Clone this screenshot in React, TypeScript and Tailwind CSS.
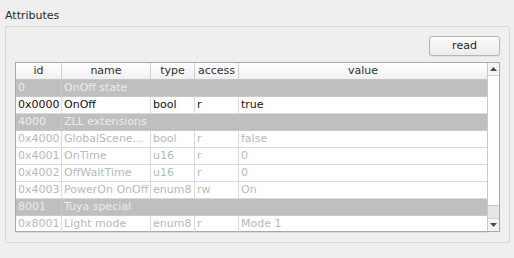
import { ReactNode } from 'react';

type Row =
  | { kind: 'group'; id: string; title: string }
  | { kind: 'attr'; id: string; name: string; type: string; access: string; value: string; enabled?: boolean };

const rows: Row[] = [
  { kind: 'group', id: '0', title: 'OnOff state' },
  { kind: 'attr', id: '0x0000', name: 'OnOff', type: 'bool', access: 'r', value: 'true', enabled: true },
  { kind: 'group', id: '4000', title: 'ZLL extensions' },
  { kind: 'attr', id: '0x4000', name: 'GlobalScene...', type: 'bool', access: 'r', value: 'false' },
  { kind: 'attr', id: '0x4001', name: 'OnTime', type: 'u16', access: 'r', value: '0' },
  { kind: 'attr', id: '0x4002', name: 'OffWaitTime', type: 'u16', access: 'r', value: '0' },
  { kind: 'attr', id: '0x4003', name: 'PowerOn OnOff', type: 'enum8', access: 'rw', value: 'On' },
  { kind: 'group', id: '8001', title: 'Tuya special' },
  { kind: 'attr', id: '0x8001', name: 'Light mode', type: 'enum8', access: 'r', value: 'Mode 1' },
];

const cols = 'grid grid-cols-[46px_89px_44px_44px_1fr]';

function Cell({ children, last }: { children: ReactNode; last?: boolean }) {
  return (
    <div className={`pl-[2px] whitespace-nowrap overflow-hidden leading-[16px] ${last ? '' : 'border-r border-[#dadada]'}`}>
      {children}
    </div>
  );
}

function Head({ children, last }: { children: ReactNode; last?: boolean }) {
  return (
    <div className={`text-center leading-[16px] text-[#303030] ${last ? '' : 'border-r border-[#cfcfcf]'}`}>
      {children}
    </div>
  );
}

export default function App() {
  return (
    <div className="w-[514px] h-[258px] bg-[#efefef] text-[11px] text-black overflow-hidden"
      style={{ fontFamily: '"DejaVu Sans", sans-serif' }}>
      {/* Label */}
      <div className="pl-[5px] pt-[9px] leading-[13px] text-[#2a2a2a]">Attributes</div>

      {/* Group box */}
      <div className="ml-[5px] mt-[4px] w-[505px] h-[217px] border border-[#d5d5d5] rounded-[2px] flex flex-col">
        <div className="flex justify-end pt-[9px] pr-[9px]">
          <button className="w-[71px] h-[20px] rounded-[3px] border border-[#b4b4b4] bg-gradient-to-b from-[#fbfbfb] to-[#ececec] text-[#1e1e1e] leading-[18px] shadow-[0_1px_0_#e2e2e2]">
            read
          </button>
        </div>

        {/* Table */}
        <div className="ml-[9px] mt-[6px] w-[485px] h-[170px] border border-[#a9a9a9] bg-white flex">
          <div className="flex-1 flex flex-col min-w-0">
            <div className={`${cols} h-[16px] bg-gradient-to-b from-[#ffffff] to-[#f0f0f0] border-b border-[#c4c4c4] box-content`}>
              <Head>id</Head>
              <Head>name</Head>
              <Head>type</Head>
              <Head>access</Head>
              <Head last>value</Head>
            </div>
            {rows.map((r) =>
              r.kind === 'group' ? (
                <div key={r.id} className={`${cols} h-[17px] bg-[#bfbfbf] text-[#ececec] border-b border-[#c8c8c8]`}>
                  <div className="pl-[2px] leading-[16px] border-r border-[#cbcbcb]">{r.id}</div>
                  <div className="col-span-4 pl-[2px] leading-[16px] whitespace-nowrap">{r.title}</div>
                </div>
              ) : (
                <div key={r.id}
                  className={`${cols} h-[17px] border-b border-[#dadada] ${r.enabled ? 'text-[#111]' : 'text-[#b3bcb3]'}`}>
                  <Cell>{r.id}</Cell>
                  <Cell>{r.name}</Cell>
                  <Cell>{r.type}</Cell>
                  <Cell>{r.access}</Cell>
                  <Cell last>{r.value}</Cell>
                </div>
              )
            )}
          </div>

          {/* Scrollbar */}
          <div className="w-[12px] flex flex-col border-l border-[#c9c9c9] bg-[#f4f4f4]">
            <div className="h-[13px] flex items-center justify-center border-b border-[#d4d4d4]">
              <svg width="7" height="4" viewBox="0 0 7 4"><path d="M0 4 L3.5 0 L7 4 Z" fill="#4a4a4a" /></svg>
            </div>
            <div className="h-[130px] bg-white border-b border-[#c8c8c8]" />
            <div className="flex-1 bg-[#e6e6e6] border-b border-[#d4d4d4]" />
            <div className="h-[12px] flex items-center justify-center">
              <svg width="7" height="4" viewBox="0 0 7 4"><path d="M0 0 L3.5 4 L7 0 Z" fill="#4a4a4a" /></svg>
            </div>
          </div>
        </div>
      </div>
    </div>
  );
}
